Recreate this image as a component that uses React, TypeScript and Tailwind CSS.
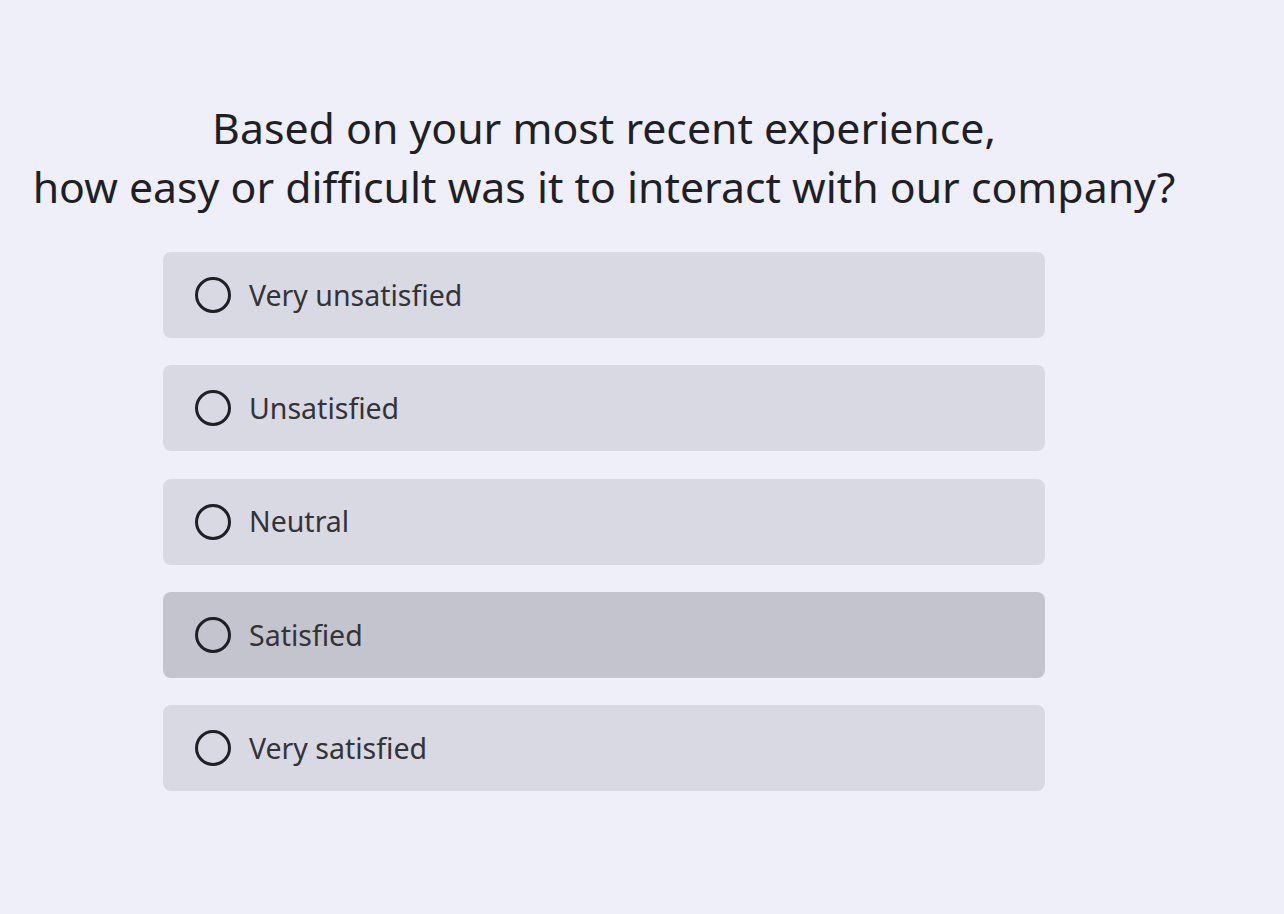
import React, { useState } from "react";

const options = [
  "Very unsatisfied",
  "Unsatisfied",
  "Neutral",
  "Satisfied",
  "Very satisfied",
];

export default function App() {
  const [hovered, setHovered] = useState<number | null>(3);
  const [selected, setSelected] = useState<number | null>(null);

  return (
    <div
      className="min-h-[914px] w-full bg-[#eeeff8] text-[#1f1f24]"
      style={{ fontFamily: '"Noto Sans", "Open Sans", sans-serif' }}
    >
      <div className="flex w-[1208px] flex-col items-center pt-[98px]">
        <h1 className="text-center text-[42.8px] leading-[59px] font-normal whitespace-nowrap">
          Based on your most recent experience,
          <br />
          how easy or difficult was it to interact with our company?
        </h1>
        <div className="mt-[36px] flex w-[882px] flex-col gap-[27.3px]">
          {options.map((label, i) => (
            <button
              key={label}
              onMouseEnter={() => setHovered(i)}
              onClick={() => setSelected(i)}
              className={`flex h-[86px] items-center gap-[18px] rounded-lg px-[32px] text-left ${
                hovered === i ? "bg-[#c4c4ce]" : "bg-[#d9d9e3]"
              }`}
            >
              <span className="flex h-[36px] w-[36px] shrink-0 items-center justify-center rounded-full border-[3px] border-[#1f1f24]">
                {selected === i && (
                  <span className="h-[18px] w-[18px] rounded-full bg-[#1f1f24]" />
                )}
              </span>
              <span className="text-[28.5px] text-[#333338]">{label}</span>
            </button>
          ))}
        </div>
      </div>
    </div>
  );
}
